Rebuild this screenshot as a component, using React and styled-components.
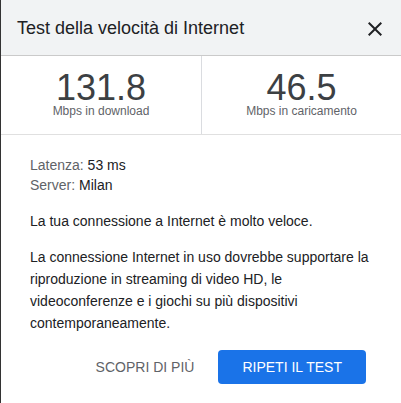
import React from "react";
import styled, { createGlobalStyle } from "styled-components";

const Global = createGlobalStyle`
  html, body { margin: 0; padding: 0; background: #ffffff; }
  body { font-family: "Liberation Sans", Arial, sans-serif; }
  * { box-sizing: border-box; }
`;

const Dialog = styled.div`
  width: 401px;
  height: 403px;
  border-left: 1px solid #333333;
  background: #ffffff;
  display: flex;
  flex-direction: column;
`;

const Header = styled.div`
  height: 56px;
  background: #f1f3f4;
  border-bottom: 1px solid #cacaca;
  display: flex;
  align-items: center;
  justify-content: space-between;
  padding: 0 14px 0 16px;
`;

const Title = styled.h1`
  margin: 0;
  font-size: 18px;
  font-weight: 400;
  color: #202124;
  line-height: 24px;
  padding-top: 1px;
`;

const CloseButton = styled.button`
  border: 0;
  background: none;
  padding: 0;
  width: 24px;
  height: 24px;
  display: flex;
  align-items: center;
  justify-content: center;
  cursor: pointer;
  margin-top: 2px;
  svg { display: block; }
`;

const Stats = styled.div`
  display: grid;
  grid-template-columns: 1fr 1fr;
  border-bottom: 1px solid #e0e0e0;
`;

const Stat = styled.div`
  display: flex;
  flex-direction: column;
  align-items: center;
  padding: 14px 0 17px;
  border-left: ${(p) => (p.$divided ? "1px solid #dadce0" : "0")};
`;

const Value = styled.div`
  font-size: 36px;
  line-height: 35px;
  color: #3c4043;
`;

const Unit = styled.div`
  font-size: 12px;
  line-height: 12px;
  color: #5f6368;
`;

const Body = styled.div`
  padding: 20px 30px 0 29px;
  display: flex;
  flex-direction: column;
`;

const InfoLine = styled.div`
  font-size: 14px;
  line-height: 20px;
  color: #202124;
`;

const InfoLabel = styled.span`
  color: #5f6368;
`;

const Paragraph = styled.p`
  margin: ${(p) => p.$top}px 0 0;
  font-size: 14px;
  line-height: 22px;
  color: #202124;
`;

const Actions = styled.div`
  display: flex;
  justify-content: flex-end;
  align-items: center;
  padding: 16px 35px 0 0;
`;

const TextButton = styled.button`
  border: 0;
  background: none;
  font-family: inherit;
  font-size: 14px;
  color: #5f6368;
  height: 34px;
  padding: 0 16px;
  margin-right: 8px;
  cursor: pointer;
`;

const PrimaryButton = styled.button`
  border: 0;
  background: #1a73e8;
  border-radius: 4px;
  font-family: inherit;
  font-size: 14px;
  color: #ffffff;
  height: 34px;
  padding: 0 24px;
  cursor: pointer;
`;

export default function App() {
  return (
    <>
      <Global />
      <Dialog>
        <Header>
          <Title>Test della velocità di Internet</Title>
          <CloseButton aria-label="Chiudi">
            <svg width="24" height="24" viewBox="0 0 24 24">
              <path
                fill="#202124"
                d="M19 6.41L17.59 5 12 10.59 6.41 5 5 6.41 10.59 12 5 17.59 6.41 19 12 13.41 17.59 19 19 17.59 13.41 12z"
              />
            </svg>
          </CloseButton>
        </Header>
        <Stats>
          <Stat>
            <Value>131.8</Value>
            <Unit>Mbps in download</Unit>
          </Stat>
          <Stat $divided>
            <Value>46.5</Value>
            <Unit>Mbps in caricamento</Unit>
          </Stat>
        </Stats>
        <Body>
          <InfoLine>
            <InfoLabel>Latenza: </InfoLabel>53 ms
          </InfoLine>
          <InfoLine>
            <InfoLabel>Server: </InfoLabel>Milan
          </InfoLine>
          <Paragraph $top={15}>La tua connessione a Internet è molto veloce.</Paragraph>
          <Paragraph $top={14}>
            La connessione Internet in uso dovrebbe supportare la riproduzione in
            streaming di video HD, le videoconferenze e i giochi su più dispositivi
            contemporaneamente.
          </Paragraph>
        </Body>
        <Actions>
          <TextButton>SCOPRI DI PIÙ</TextButton>
          <PrimaryButton>RIPETI IL TEST</PrimaryButton>
        </Actions>
      </Dialog>
    </>
  );
}
